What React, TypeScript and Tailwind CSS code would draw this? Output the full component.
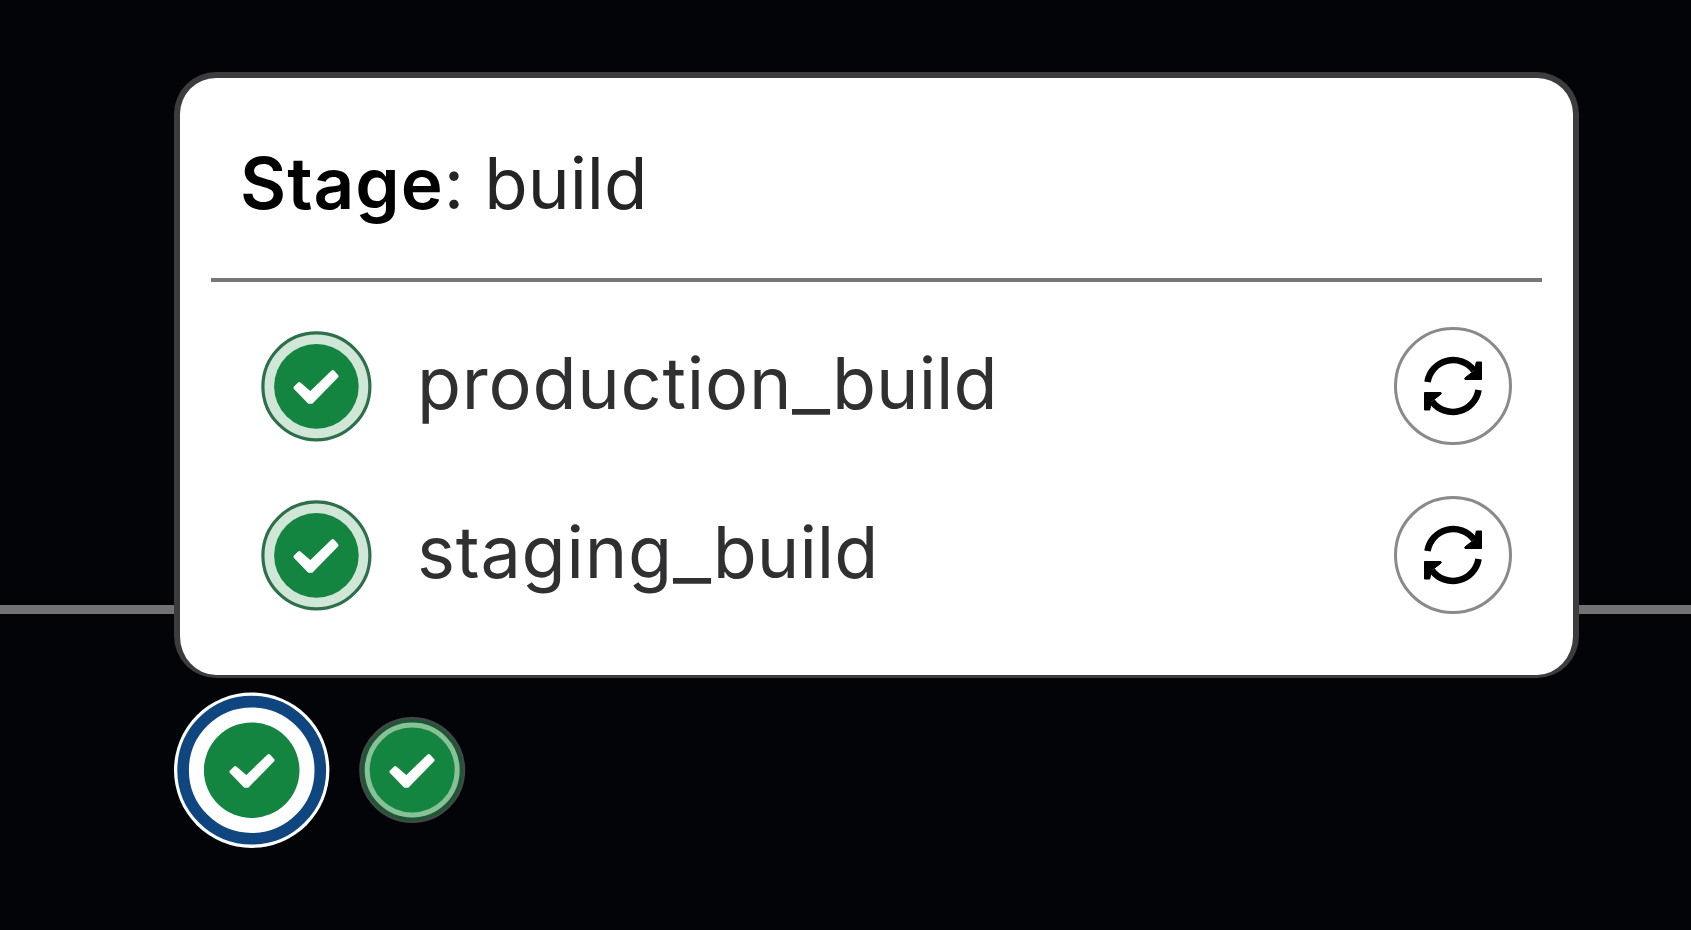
type StatusVariant = "plain" | "active" | "outlined";

interface Job {
  prefix: string;
  suffix: string;
}

const jobs: Job[] = [
  { prefix: "production", suffix: "build" },
  { prefix: "staging", suffix: "build" },
];

// All the circles share one 160x160 canvas, centred on 80,80
function StatusIcon({ variant }: { variant: StatusVariant }) {
  return (
    <svg
      viewBox="0 0 160 160"
      className="block size-40 shrink-0"
      aria-label="passed"
      role="img"
    >
      {variant === "plain" && (
        <>
          <circle cx="80.4" cy="80.4" r="53.5" fill="#d0e7d8" stroke="#2d6f4b" strokeWidth="3.2" />
          <circle cx="80.4" cy="80.4" r="42.3" fill="#148441" />
        </>
      )}
      {variant === "active" && (
        <>
          <circle cx="79.7" cy="80.2" r="77.7" fill="#fff" />
          <circle cx="79.7" cy="80.2" r="68.6" fill="#fff" stroke="#10467f" strokeWidth="11.6" />
          <circle cx="79.7" cy="80.2" r="47.8" fill="#148441" />
        </>
      )}
      {variant === "outlined" && (
        <>
          <circle cx="80.2" cy="80" r="52" fill="#1f5735" stroke="#454749" strokeWidth="2" />
          <circle cx="80.2" cy="80" r="45" fill="#148441" stroke="#86c198" strokeWidth="5" />
        </>
      )}
      <path
        d="M59.2 81.7 63.3 77.7 74.3 87.4 96.7 65.7 100.8 70.2 75.6 96H73Z"
        fill="#fff"
        stroke="#fff"
        strokeWidth="3.4"
        strokeLinejoin="round"
      />
    </svg>
  );
}

function RetryArrow() {
  return (
    <>
      <path d="M4.5 26A26 26 0 0 1 51 14.5" stroke="#000" strokeWidth="6.6" />
      <path
        d="M58.5 6V23.5H42L41.8 22 51.5 14.5 53.3 6Z"
        fill="#000"
        stroke="#000"
        strokeLinejoin="round"
      />
    </>
  );
}

function RetryButton() {
  return (
    <button
      type="button"
      aria-label="Retry"
      className="flex size-[118px] shrink-0 items-center justify-center rounded-full border-3 border-[#8a8a8a]"
    >
      <svg viewBox="0 0 60 60" className="size-[60px]" fill="none">
        <RetryArrow />
        <g transform="rotate(180 30 30)">
          <RetryArrow />
        </g>
      </svg>
    </button>
  );
}

function StagePopover() {
  return (
    <section className="relative ml-[174px] h-[606px] w-[1405px] rounded-[42px] border-x-[6px] border-t-[6px] border-b-[3px] border-[#3c3c3e] bg-white">
      <header className="mx-[31px] h-[204px] border-b-4 border-[#777] pt-[60.5px] pl-[29px] text-[71px] leading-[88px] whitespace-pre text-[#242426]">
        <span className="font-[560] tracking-[1px] text-black">Stage</span>
        <span>: build</span>
      </header>
      <ul className="pt-[20px]">
        {jobs.map((job) => (
          <li key={job.prefix} className="flex h-[168.5px] items-center pr-[61px] pl-[56px]">
            <StatusIcon variant="plain" />
            <span className="flex-1 pb-[6px] pl-[21px] text-[72px] leading-[88px] text-[#303032]">
              <span className="tracking-[0.75px]">{job.prefix}</span>
              <span className="mr-[7px] inline-block origin-left scale-x-[1.16]">_</span>
              {job.suffix}
            </span>
            <RetryButton />
          </li>
        ))}
      </ul>
    </section>
  );
}

export default function App() {
  return (
    <main className="relative h-[930px] w-full overflow-hidden bg-[#030408] pt-[72px] font-['Inter','Liberation_Sans',sans-serif]">
      {/* connector line running behind the popover */}
      <div className="absolute inset-x-0 top-[605px] h-[9px] bg-[#727272]" />
      <StagePopover />
      <div className="mt-[12px] ml-[172px] flex">
        <StatusIcon variant="active" />
        <StatusIcon variant="outlined" />
      </div>
    </main>
  );
}
